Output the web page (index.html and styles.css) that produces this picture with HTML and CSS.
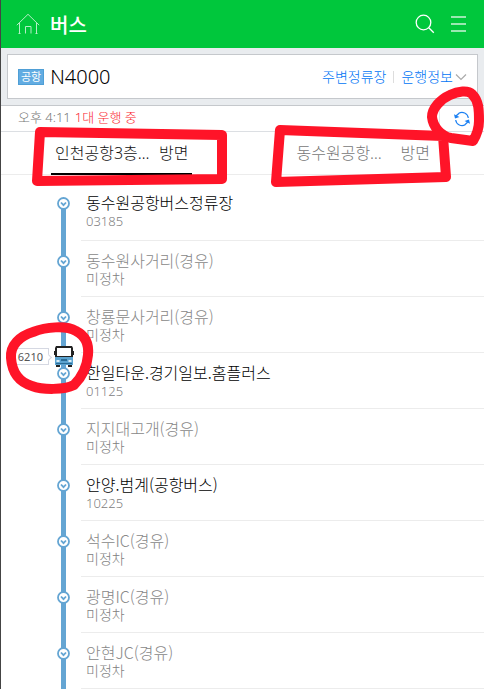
FILE: index.html
```html
<!DOCTYPE html>
<html lang="ko">
<head>
<meta charset="utf-8">
<meta name="viewport" content="width=device-width, initial-scale=1">
<title>버스 N4000</title>
<link rel="stylesheet" href="styles.css">
</head>
<body>
<header class="topbar">
  <a class="icon-link" href="#" aria-label="홈"><svg width="24" height="22" viewBox="0 0 24 22" fill="none" stroke="currentColor"><path d="M.8 12.200 12 1.300l11.200 10.900M3.500 10v10.500M20.500 10v10.500M9.500 20.500v-7h5.500v7M2.500 20.500h2M19.500 20.500h2"/></svg></a>
  <h1 class="title">버스</h1>
  <button class="icon-button search" type="button" aria-label="검색"><svg width="20" height="20" viewBox="0 0 20 20" fill="none" stroke="currentColor" stroke-width="1.300"><circle cx="8.500" cy="8.500" r="7.300"/><path d="m13.800 13.800 5 5"/></svg></button>
  <button class="icon-button menu" type="button" aria-label="메뉴"><svg width="15" height="16" viewBox="0 0 15 16" fill="currentColor"><path d="M0 0h15v2H0zM0 7h15v2H0zM0 14h15v2H0z"/></svg></button>
</header>

<main>
  <section class="route">
    <div class="route-card">
      <span class="badge">공항</span>
      <h2 class="route-name">N4000</h2>
      <a class="route-link" href="#">주변정류장</a>
      <span class="divider"></span>
      <a class="route-link" href="#">운행정보<svg width="12" height="8" viewBox="0 0 12 8" fill="none" stroke="#aaa" stroke-width="1.200"><path d="m1 1.500 5 5 5-5"/></svg></a>
    </div>
  </section>

  <div class="status">
    <span class="time">오후 4:11</span>
    <span class="running">1대 운행 중</span>
    <button class="refresh" type="button" aria-label="새로고침"><svg width="16" height="16" viewBox="0 0 16 16" fill="none" stroke="currentColor" stroke-width="1.200"><path d="M4.500 2.500A6.300 6.300 0 0 1 14.300 7M11.500 13.500A6.300 6.300 0 0 1 1.700 9M1.700 7A6.300 6.300 0 0 1 5 2.400M14.300 9A6.300 6.300 0 0 1 11 13.600"/><path fill="currentColor" stroke="none" d="M0 3.200 5.500 6 1 7.500zM16 12.800 10.500 10 15 8.500z"/></svg></button>
    <svg class="mark mark-refresh" width="60" height="64" viewBox="0 0 60 64"><path d="M9 31C9 22 18 13 27 9c8-4 18-5 22-1 7 7 7 16 7 27 0 9-3 15-6 20l-22-3C18 50 10 41 9 31z"/></svg>
  </div>

  <div class="tabs" role="tablist">
    <div class="tab-cell">
      <button class="tab active" type="button" role="tab" aria-selected="true"><span class="tab-name">인천공항3층…</span><span>방면</span></button>
      <svg class="mark mark-tab" width="198" height="62" viewBox="0 0 198 62"><path d="m11 7 182 3v44L8 56z"/></svg>
    </div>
    <div class="tab-cell">
      <button class="tab" type="button" role="tab" aria-selected="false"><span class="tab-name">동수원공항…</span><span>방면</span></button>
      <svg class="mark mark-tab" width="198" height="62" viewBox="0 0 198 62"><path d="m10 5 163 6 3 41-170 5z"/></svg>
    </div>
  </div>

  <ul class="stops">
    <li class="stop first"><div class="rail"><svg class="node" width="13" height="13" viewBox="0 0 13 13"><circle cx="6.500" cy="6.500" r="5.500"/><path d="m4 5.500 2.500 2.700L9 5.500"/></svg></div><div class="info"><strong class="name">동수원공항버스정류장</strong><span class="code">03185</span></div></li>
    <li class="stop pass"><div class="rail"><svg class="node" width="13" height="13" viewBox="0 0 13 13"><circle cx="6.500" cy="6.500" r="5.500"/><path d="m4 5.500 2.500 2.700L9 5.500"/></svg></div><div class="info"><strong class="name">동수원사거리(경유)</strong><span class="note">미정차</span></div></li>
    <li class="stop pass"><div class="rail"><svg class="node" width="13" height="13" viewBox="0 0 13 13"><circle cx="6.500" cy="6.500" r="5.500"/><path d="m4 5.500 2.500 2.700L9 5.500"/></svg></div><div class="info"><strong class="name">창룡문사거리(경유)</strong><span class="note">미정차</span></div></li>
    <li class="stop"><div class="rail"><svg class="node" width="13" height="13" viewBox="0 0 13 13"><circle cx="6.500" cy="6.500" r="5.500"/><path d="m4 5.500 2.500 2.700L9 5.500"/></svg>
      <div class="bus"><span class="plate">6210</span><svg width="20" height="21" viewBox="0 0 20 21"><path fill="#222" d="M2 0h16l1 2v3h1v4h-1v2H1V9H0V5h1V2z"/><path fill="#fff" d="M3 2h14v8H3z"/><path fill="#5ba3d0" d="M1 11h18v8H1z"/><path fill="#222" d="M2 19h4v2H2zM14 19h4v2h-4z"/><path fill="#2a6c96" d="M7 13h6v2H7zM2 17h16v1H2z"/><path fill="#d9edf8" d="M2.500 14h3v2h-3zM14.500 14h3v2h-3z"/></svg></div>
      <svg class="mark mark-bus" width="94" height="74" viewBox="0 0 94 74"><path d="M10 39C9 26 19 17 32 13c13-5 33-7 43-1 10 5 13 14 12 24-1 12-7 23-14 30-10 5-31 5-42 1C18 63 11 53 10 39z"/></svg>
    </div><div class="info"><strong class="name">한일타운.경기일보.홈플러스</strong><span class="code">01125</span></div></li>
    <li class="stop pass"><div class="rail"><svg class="node" width="13" height="13" viewBox="0 0 13 13"><circle cx="6.500" cy="6.500" r="5.500"/><path d="m4 5.500 2.500 2.700L9 5.500"/></svg></div><div class="info"><strong class="name">지지대고개(경유)</strong><span class="note">미정차</span></div></li>
    <li class="stop"><div class="rail"><svg class="node" width="13" height="13" viewBox="0 0 13 13"><circle cx="6.500" cy="6.500" r="5.500"/><path d="m4 5.500 2.500 2.700L9 5.500"/></svg></div><div class="info"><strong class="name">안양.범계(공항버스)</strong><span class="code">10225</span></div></li>
    <li class="stop pass"><div class="rail"><svg class="node" width="13" height="13" viewBox="0 0 13 13"><circle cx="6.500" cy="6.500" r="5.500"/><path d="m4 5.500 2.500 2.700L9 5.500"/></svg></div><div class="info"><strong class="name">석수IC(경유)</strong><span class="note">미정차</span></div></li>
    <li class="stop pass"><div class="rail"><svg class="node" width="13" height="13" viewBox="0 0 13 13"><circle cx="6.500" cy="6.500" r="5.500"/><path d="m4 5.500 2.500 2.700L9 5.500"/></svg></div><div class="info"><strong class="name">광명IC(경유)</strong><span class="note">미정차</span></div></li>
    <li class="stop pass"><div class="rail"><svg class="node" width="13" height="13" viewBox="0 0 13 13"><circle cx="6.500" cy="6.500" r="5.500"/><path d="m4 5.500 2.500 2.700L9 5.500"/></svg></div><div class="info"><strong class="name">안현JC(경유)</strong><span class="note">미정차</span></div></li>
  </ul>
</main>
</body>
</html>
```
FILE: styles.css
```css
* { box-sizing: border-box; }

body {
  margin: 0;
  border-left: 1px solid #444;
  background: #fff;
  color: #000;
  font-family: "Noto Sans", "Noto Sans CJK KR", sans-serif;
  font-size: 16px;
  font-weight: 300;
  line-height: 20px;
}

button {
  padding: 0;
  border: 0;
  background: none;
  color: inherit;
  font: inherit;
}

a { color: inherit; text-decoration: none; }
svg { display: block; }
h1, h2, ul { margin: 0; padding: 0; }

.topbar {
  display: flex;
  align-items: center;
  height: 48px;
  padding: 0 18px 0 15px;
  background: #00c73c;
  color: #fff;
}
.icon-link { opacity: 0.7; }
.title {
  flex: 1;
  margin-left: 10px;
  padding-top: 3px;
  font-size: 20px;
  font-weight: 500;
  line-height: 28px;
}
.menu { margin-left: 16px; opacity: 0.6; }

.route {
  padding: 6px 6px;
  border-bottom: 1px solid #c5c8cc;
  background: #e9ecef;
}
.route-card {
  display: flex;
  align-items: center;
  height: 45px;
  padding: 0 10px;
  border: 1px solid #c5c8cc;
  background: #fff;
}
.badge {
  padding: 0 2px;
  border: 1px solid #4f9fd6;
  background: #62ace2;
  color: #fff;
  font-size: 11px;
  font-weight: 400;
  line-height: 14px;
}
.route-name {
  flex: 1;
  margin-left: 6px;
  font-size: 20px;
  font-weight: 300;
}
.route-link {
  display: flex;
  align-items: center;
  gap: 2px;
  color: #0074f5;
  font-size: 14px;
}
.divider {
  width: 1px;
  height: 12px;
  margin: 0 7px;
  background: #ddd;
}

.status {
  position: relative;
  display: flex;
  align-items: center;
  gap: 4px;
  height: 26px;
  padding-left: 17px;
  border-bottom: 1px solid #dcdfe3;
  font-size: 13px;
}
.time, .running { padding-bottom: 3px; }
.time { color: #777; }
.running { color: #fa2832; }
.refresh {
  display: flex;
  align-items: center;
  justify-content: center;
  width: 45px;
  height: 25px;
  margin-left: auto;
  border-left: 1px solid #e2e5e8;
  color: #1c80f2;
}

.tabs {
  display: flex;
  height: 43px;
  border-bottom: 1px solid #ececec;
}
.tab-cell {
  position: relative;
  flex: 1;
  display: flex;
  justify-content: center;
}
.tab {
  display: flex;
  height: 43px;
  padding: 0 4px;
  border-bottom: 2px solid transparent;
  color: #777;
  line-height: 43px;
}
.tab.active { border-color: #000; color: #111; }
.tab-name { width: 104px; text-align: left; }

.stops { padding-top: 8px; list-style: none; }
.stop { display: flex; }
.rail {
  position: relative;
  width: 80px;
  padding: 14px 0 0 56px;
  background: linear-gradient(#64a5d3, #64a5d3) 60px 0 / 5px 100% no-repeat;
}
.first .rail { background-position: 60px 20px; }
.node {
  fill: #fff;
  stroke: #64a5d3;
  stroke-width: 1.8;
}
.info {
  flex: 1;
  display: flex;
  flex-direction: column;
  padding: 9px 5px 8px;
  border-bottom: 1px solid #ececec;
}
.first .info { padding-bottom: 10px; }
.name { font-weight: 300; font-family: "Noto Sans CJK KR", sans-serif; }
.code, .note { color: #808080; line-height: 18px; }
.code { font-size: 13px; }
.note { font-size: 14px; }
.pass .name { color: #888; }

.bus {
  position: absolute;
  top: -7px;
  right: 7px;
  display: flex;
  align-items: center;
  gap: 5px;
}
.plate {
  position: relative;
  padding: 0 5px;
  border: 1px solid #d5d8e2;
  background: #fff;
  color: #555;
  font-size: 11px;
  font-weight: 400;
  line-height: 15px;
}
.plate::after {
  content: "";
  position: absolute;
  top: 6px;
  right: -3px;
  width: 4px;
  height: 4px;
  border: solid #d5d8e2;
  border-width: 1px 1px 0 0;
  background: #fff;
  transform: rotate(45deg);
}

.mark {
  position: absolute;
  z-index: 1;
  overflow: visible;
  fill: none;
  stroke: #ff1428;
  stroke-width: 10;
  stroke-linejoin: round;
  pointer-events: none;
}
.mark-refresh { top: -20px; right: 1px; }
.mark-tab { top: -7px; left: 50%; margin-left: -93px; }
.mark-bus { top: -34px; left: 0; }
```
